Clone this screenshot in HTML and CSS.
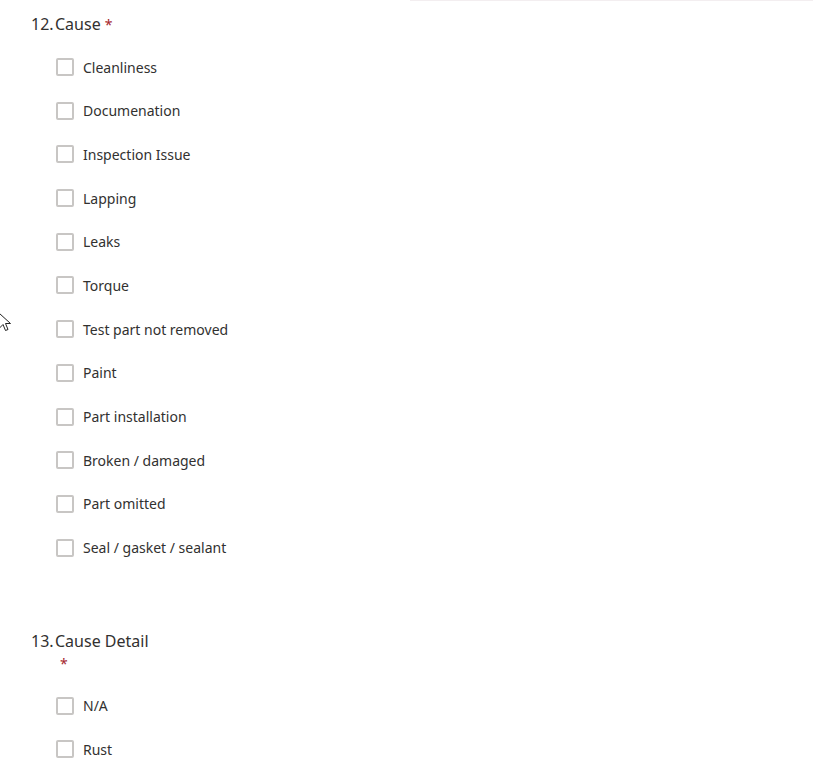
FILE: index.html
```html
<!DOCTYPE html>
<html>
<head>
<meta charset="utf-8">
<link rel="stylesheet" href="styles.css">
</head>
<body>
<div class="topline"></div>
<div class="page">
  <section class="question">
    <div class="qtitle"><span class="num">12.</span><span class="text">Cause</span><span class="req">*</span></div>
    <div class="options">
      <label class="option"><span class="box"></span><span>Cleanliness</span></label>
      <label class="option"><span class="box"></span><span>Documenation</span></label>
      <label class="option"><span class="box"></span><span>Inspection Issue</span></label>
      <label class="option"><span class="box"></span><span>Lapping</span></label>
      <label class="option"><span class="box"></span><span>Leaks</span></label>
      <label class="option"><span class="box"></span><span>Torque</span></label>
      <label class="option"><span class="box"></span><span>Test part not removed</span></label>
      <label class="option"><span class="box"></span><span>Paint</span></label>
      <label class="option"><span class="box"></span><span>Part installation</span></label>
      <label class="option"><span class="box"></span><span>Broken / damaged</span></label>
      <label class="option"><span class="box"></span><span>Part omitted</span></label>
      <label class="option"><span class="box"></span><span>Seal / gasket / sealant</span></label>
    </div>
  </section>
  <section class="question q13">
    <div class="qtitle"><span class="num">13.</span><span class="text">Cause Detail</span></div>
    <div class="req-line"><span class="req">*</span></div>
    <div class="options">
      <label class="option"><span class="box"></span><span>N/A</span></label>
      <label class="option"><span class="box"></span><span>Rust</span></label>
    </div>
  </section>
</div>
<svg class="cursor" width="14" height="20" viewBox="0 0 14 20"><path d="M0.5 0.5 L0.5 15 L4 11.5 L6.5 17.5 L9 16.5 L6.5 10.5 L11.5 10.5 Z" fill="#fff" stroke="#222" stroke-width="1"/></svg>
</body>
</html>
```

FILE: styles.css
```css
html, body {
  margin: 0;
  padding: 0;
  background: #ffffff;
}
body {
  position: relative;
  font-family: "Noto Sans", "Open Sans", sans-serif;
  color: #323130;
}
.topline {
  margin-left: 410px;
  height: 1px;
  background: #f3eef0;
}
.page {
  padding: 12px 0 0 31px;
}
.qtitle {
  display: flex;
  align-items: baseline;
  height: 22px;
  font-size: 16px;
  line-height: 22px;
  color: #323130;
}
.num {
  width: 24px;
}
.req {
  color: #a4262c;
  font-size: 14px;
  line-height: 22px;
  margin-left: 4px;
}
.req-line {
  height: 22px;
  font-size: 16px;
  line-height: 22px;
  padding-left: 25px;
}
.options {
  display: flex;
  flex-direction: column;
  gap: 23.7px;
  margin-top: 22px;
  margin-left: 25px;
}
.option {
  display: flex;
  align-items: center;
  height: 20px;
  gap: 9px;
  font-size: 14px;
  color: #323130;
}
.box {
  box-sizing: border-box;
  width: 18px;
  height: 18px;
  border: 2px solid #c8c6c4;
  border-radius: 2px;
  background: #fff;
}
.q13 {
  margin-top: 72px;
}
.cursor {
  position: absolute;
  left: -1px;
  top: 313px;
}
```
